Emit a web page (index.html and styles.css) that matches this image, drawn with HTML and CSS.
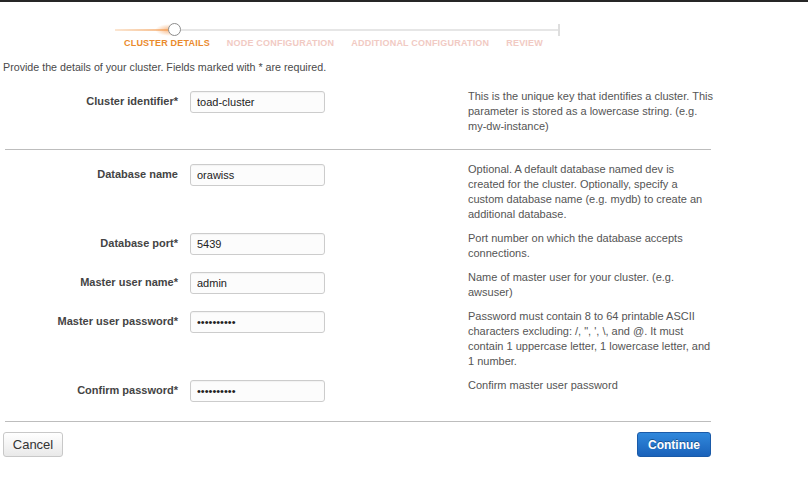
FILE: index.html
```html
<!DOCTYPE html>
<html>
<head>
<meta charset="utf-8">
<link rel="stylesheet" href="styles.css">
</head>
<body>
<div class="topbar"></div>
<div class="wizard">
  <div class="track">
    <div class="line"></div>
    <div class="done"></div>
    <div class="glow"></div>
    <div class="knob"></div>
    <div class="tick"></div>
  </div>
  <div class="step-labels">
    <span class="step active">CLUSTER DETAILS</span>
    <span class="step">NODE CONFIGURATION</span>
    <span class="step">ADDITIONAL CONFIGURATION</span>
    <span class="step">REVIEW</span>
  </div>
</div>
<p class="intro">Provide the details of your cluster. Fields marked with * are required.</p>
<form class="form">
  <div class="group">
    <div class="row">
      <label class="lbl">Cluster identifier*</label>
      <div class="field"><input class="inp" type="text" value="toad-cluster"></div>
      <div class="help">This is the unique key that identifies a cluster. This<br>parameter is stored as a lowercase string. (e.g.<br>my-dw-instance)</div>
    </div>
  </div>
  <hr class="sep first">
  <div class="group">
    <div class="row">
      <label class="lbl">Database name</label>
      <div class="field"><input class="inp" type="text" value="orawiss"></div>
      <div class="help">Optional. A default database named dev is<br>created for the cluster. Optionally, specify a<br>custom database name (e.g. mydb) to create an<br>additional database.</div>
    </div>
    <div class="row">
      <label class="lbl">Database port*</label>
      <div class="field"><input class="inp" type="text" value="5439"></div>
      <div class="help">Port number on which the database accepts<br>connections.</div>
    </div>
    <div class="row">
      <label class="lbl">Master user name*</label>
      <div class="field"><input class="inp" type="text" value="admin"></div>
      <div class="help">Name of master user for your cluster. (e.g.<br>awsuser)</div>
    </div>
    <div class="row">
      <label class="lbl">Master user password*</label>
      <div class="field"><input class="inp" type="password" value="abcdefghij"></div>
      <div class="help">Password must contain 8 to 64 printable ASCII<br>characters excluding: /, ", ', \, and @. It must<br>contain 1 uppercase letter, 1 lowercase letter, and<br>1 number.</div>
    </div>
    <div class="row">
      <label class="lbl">Confirm password*</label>
      <div class="field"><input class="inp" type="password" value="abcdefghij"></div>
      <div class="help">Confirm master user password</div>
    </div>
  </div>
  <hr class="sep last">
  <div class="actions">
    <button type="button" class="btn cancel">Cancel</button>
    <button type="button" class="btn primary">Continue</button>
  </div>
</form>
</body>
</html>
```

FILE: styles.css
```css
html, body {
  margin: 0;
  padding: 0;
  background: #ffffff;
  font-family: "Liberation Sans", Arial, sans-serif;
}

.topbar {
  height: 2px;
  background: #262626;
}

.wizard {
  margin-top: 21px;
}

.track {
  position: relative;
  margin-left: 115px;
  width: 445px;
  height: 13px;
}

.track .line {
  position: absolute;
  left: 0;
  right: 0;
  top: 6px;
  height: 2px;
  background: #e6e6e6;
}

.track .done {
  position: absolute;
  left: 0;
  top: 6px;
  width: 56px;
  height: 2px;
  background: linear-gradient(to right, #fbe6d2, #f6b883);
}

.track .glow {
  position: absolute;
  left: 40px;
  top: 1px;
  width: 18px;
  height: 12px;
  background: radial-gradient(ellipse at 80% 50%, rgba(245, 160, 90, 0.75), rgba(245, 170, 100, 0) 70%);
}

.track .knob {
  position: absolute;
  left: 53px;
  top: 0;
  width: 13px;
  height: 13px;
  box-sizing: border-box;
  border: 1.5px solid #8c8c8c;
  border-radius: 50%;
  background: #ffffff;
}

.track .tick {
  position: absolute;
  right: 0;
  top: 1px;
  width: 2px;
  height: 12px;
  background: #dedede;
}

.step-labels {
  display: flex;
  gap: 17px;
  margin-top: 2px;
  margin-left: 124px;
  font-size: 9px;
  line-height: 11px;
  font-weight: bold;
  letter-spacing: 0.2px;
}

.step {
  color: #f1cac3;
  white-space: nowrap;
}

.step.active {
  color: #ea8a2c;
}

.intro {
  margin: 11px 0 0 3px;
  font-size: 10.7px;
  line-height: 14px;
  color: #4a4a4a;
}

.form {
  margin: 17px 0 0 3px;
  width: 716px;
}

.group {
  display: flex;
  flex-direction: column;
  gap: 11px;
}

.row {
  display: grid;
  grid-template-columns: 175px 290px 1fr;
  align-items: start;
}

.lbl {
  text-align: right;
  font-size: 11px;
  font-weight: bold;
  line-height: 15px;
  padding-top: 3px;
  color: #444444;
}

.field {
  padding-left: 12px;
}

.inp {
  display: block;
  box-sizing: border-box;
  width: 135px;
  height: 22px;
  margin: 0;
  padding: 0 6px;
  border: 1px solid #cccccc;
  border-radius: 3px;
  background: #fcfcfc;
  box-shadow: inset 0 1px 1px rgba(0, 0, 0, 0.04);
  font-family: "Liberation Sans", Arial, sans-serif;
  font-size: 11px;
  color: #222222;
}

.help {
  margin-top: -2px;
  font-size: 11px;
  line-height: 15px;
  color: #555555;
  white-space: nowrap;
}

.sep {
  border: 0;
  height: 1px;
  background: #bdbdbd;
  margin-left: 2px;
  margin-right: 0;
  width: 706px;
}

.sep.first {
  margin-top: 15px;
  margin-bottom: 14px;
}

.sep.last {
  margin-top: 19px;
  margin-bottom: 10px;
}

.actions {
  width: 708px;
  display: flex;
  justify-content: space-between;
  align-items: center;
}

.btn {
  height: 25px;
  margin: 0;
  padding: 0;
  border-radius: 3px;
  font-family: "Liberation Sans", Arial, sans-serif;
  cursor: pointer;
}

.btn.cancel {
  width: 60px;
  border: 1px solid #c8c8c8;
  background: linear-gradient(#ffffff, #e9e9e9);
  color: #333333;
  font-size: 13px;
}

.btn.primary {
  width: 74px;
  border: 1px solid #1a5aa8;
  background: linear-gradient(#3088dc, #1a62ba);
  color: #ffffff;
  font-size: 12px;
  font-weight: bold;
  text-shadow: 0 -1px 0 rgba(0, 0, 0, 0.35);
}
```
